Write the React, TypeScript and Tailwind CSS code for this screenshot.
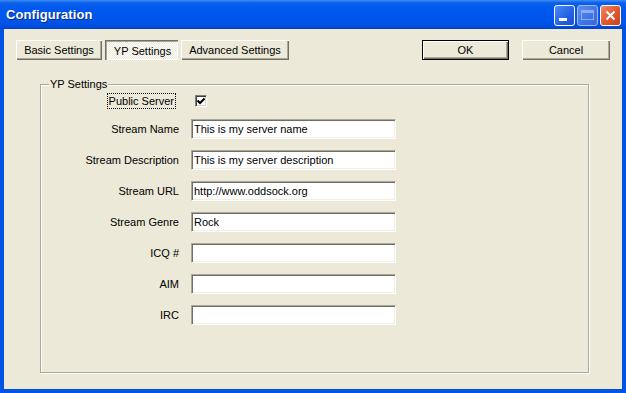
import React from 'react';

const font = "font-['Liberation_Sans',Arial,sans-serif]";

function RaisedButton({ label, w, isDefault }: { label: string; w: string; isDefault?: boolean }) {
  if (isDefault) {
    return (
      <div className={`${w} h-[20px] border border-black bg-[#ece9d8] shadow-[inset_1px_1px_#fff,inset_-1px_-1px_#716f64,inset_-2px_-2px_#aca899] flex items-center justify-center text-[11px] text-black`}>
        {label}
      </div>
    );
  }
  return (
    <div className={`${w} h-[20px] bg-[#ece9d8] shadow-[inset_1px_1px_#fff,inset_-1px_-1px_#716f64,inset_-2px_-2px_#aca899] flex items-center justify-center text-[11px] text-black`}>
      {label}
    </div>
  );
}

function PressedButton({ label, w }: { label: string; w: string }) {
  return (
    <div className={`${w} h-[20px] bg-[repeating-conic-gradient(#ffffff_0_25%,#ece9d8_0_50%)] bg-[length:2px_2px] shadow-[inset_1px_1px_#716f64,inset_2px_2px_#aca899,inset_-1px_-1px_#fff] flex items-center justify-center pt-[2px] pl-[2px] text-[11px] text-black`}>
      {label}
    </div>
  );
}

function Field({ label, value }: { label: string; value?: string }) {
  return (
    <div className="flex items-center mt-[11px] first:mt-0">
      <div className="w-[139px] text-right pr-[1px] text-[11px] text-black">{label}</div>
      <div className="ml-[11px] w-[205px] h-[20px] bg-white border border-t-[#aca899] border-l-[#aca899] border-r-white border-b-white shadow-[inset_1px_1px_#716f64,inset_-1px_-1px_#f1efe2] flex items-center pl-[2px] text-[11px] text-black whitespace-nowrap overflow-hidden">
        {value}
      </div>
    </div>
  );
}

export default function App() {
  return (
    <div className={`w-[626px] h-[393px] flex flex-col bg-[#0054e3] ${font} select-none`}>
      {/* Title bar */}
      <div className="h-[29px] flex items-center bg-[linear-gradient(to_bottom,#3d8cf5_0%,#0a60ec_10%,#0058ee_30%,#0055eb_70%,#0050e0_90%,#0042c4_100%)] pl-[6px] pr-[5px]">
        <span className="text-[13px] font-bold text-white [text-shadow:1px_1px_#0c2a8a] tracking-[0.1px]">Configuration</span>
        <div className="ml-auto flex gap-[2px] pt-[1px]">
          <div className="relative w-[21px] h-[21px] rounded-[3px] border border-white bg-[linear-gradient(135deg,#4b8bf8,#2260e4_60%,#1d4fd0)]">
            <div className="absolute left-[4px] bottom-[4px] w-[8px] h-[3px] bg-white" />
          </div>
          <div className="relative w-[21px] h-[21px] rounded-[3px] border border-[#9db6f0] bg-[linear-gradient(135deg,#5d8ff0,#3f72e6_60%,#3a68da)] flex items-center justify-center">
            <div className="w-[13px] h-[10px] border border-t-[3px] border-[#8fabe9]" />
          </div>
          <div className="w-[21px] h-[21px] rounded-[3px] border border-white bg-[linear-gradient(135deg,#f08a66,#e0562e_55%,#c8421f)] flex items-center justify-center">
            <svg width="11" height="11" viewBox="0 0 11 11">
              <path d="M1.5 1.5 L9.5 9.5 M9.5 1.5 L1.5 9.5" stroke="#fff" strokeWidth="2" />
            </svg>
          </div>
        </div>
      </div>

      {/* Body */}
      <div className="flex-1 mx-[4px] mb-[4px] bg-[#ece9d8] flex flex-col">
        <div className="flex items-start mt-[11px] pl-[12px] pr-[12px]">
          <RaisedButton label="Basic Settings" w="w-[86px]" />
          <div className="ml-[3px]"><PressedButton label="YP Settings" w="w-[73px]" /></div>
          <div className="ml-[3px]"><RaisedButton label="Advanced Settings" w="w-[108px]" /></div>
          <div className="ml-auto flex gap-[13px]">
            <RaisedButton label="OK" w="w-[87px]" isDefault />
            <RaisedButton label="Cancel" w="w-[88px]" />
          </div>
        </div>

        {/* YP Settings group */}
        <div className="relative mt-[24px] ml-[36px] mr-[33px] h-[289px] border border-[#aca899] shadow-[1px_1px_0_#fff,inset_1px_1px_0_#fff]">
          <span className="absolute left-[8px] top-[-8px] bg-[#ece9d8] px-[1px] text-[11px] text-black leading-[14px]">YP Settings</span>

          <div className="pt-[8px] flex flex-col">
            <div className="flex items-center h-[16px]">
              <div className="w-[135px] flex justify-end">
                <span className="border border-dotted border-black px-[1px] text-[11px] leading-[14px] text-black">Public Server</span>
              </div>
              <div className="ml-[19px] w-[12px] h-[12px] bg-white border border-t-[#7f7f7f] border-l-[#7f7f7f] border-r-white border-b-white shadow-[inset_1px_1px_#404040,inset_-1px_-1px_#d4d0c8] flex items-center justify-center">
                <svg width="8" height="8" viewBox="0 0 8 8">
                  <path d="M0.5 3.5 L3 6 L7.5 1.5" stroke="#000" strokeWidth="2" fill="none" />
                </svg>
              </div>
            </div>

            <div className="mt-[10px] flex flex-col">
              <Field label="Stream Name" value="This is my server name" />
              <Field label="Stream Description" value="This is my server description" />
              <Field label="Stream URL" value="http://www.oddsock.org" />
              <Field label="Stream Genre" value="Rock" />
              <Field label="ICQ #" />
              <Field label="AIM" />
              <Field label="IRC" />
            </div>
          </div>
        </div>
      </div>
    </div>
  );
}
